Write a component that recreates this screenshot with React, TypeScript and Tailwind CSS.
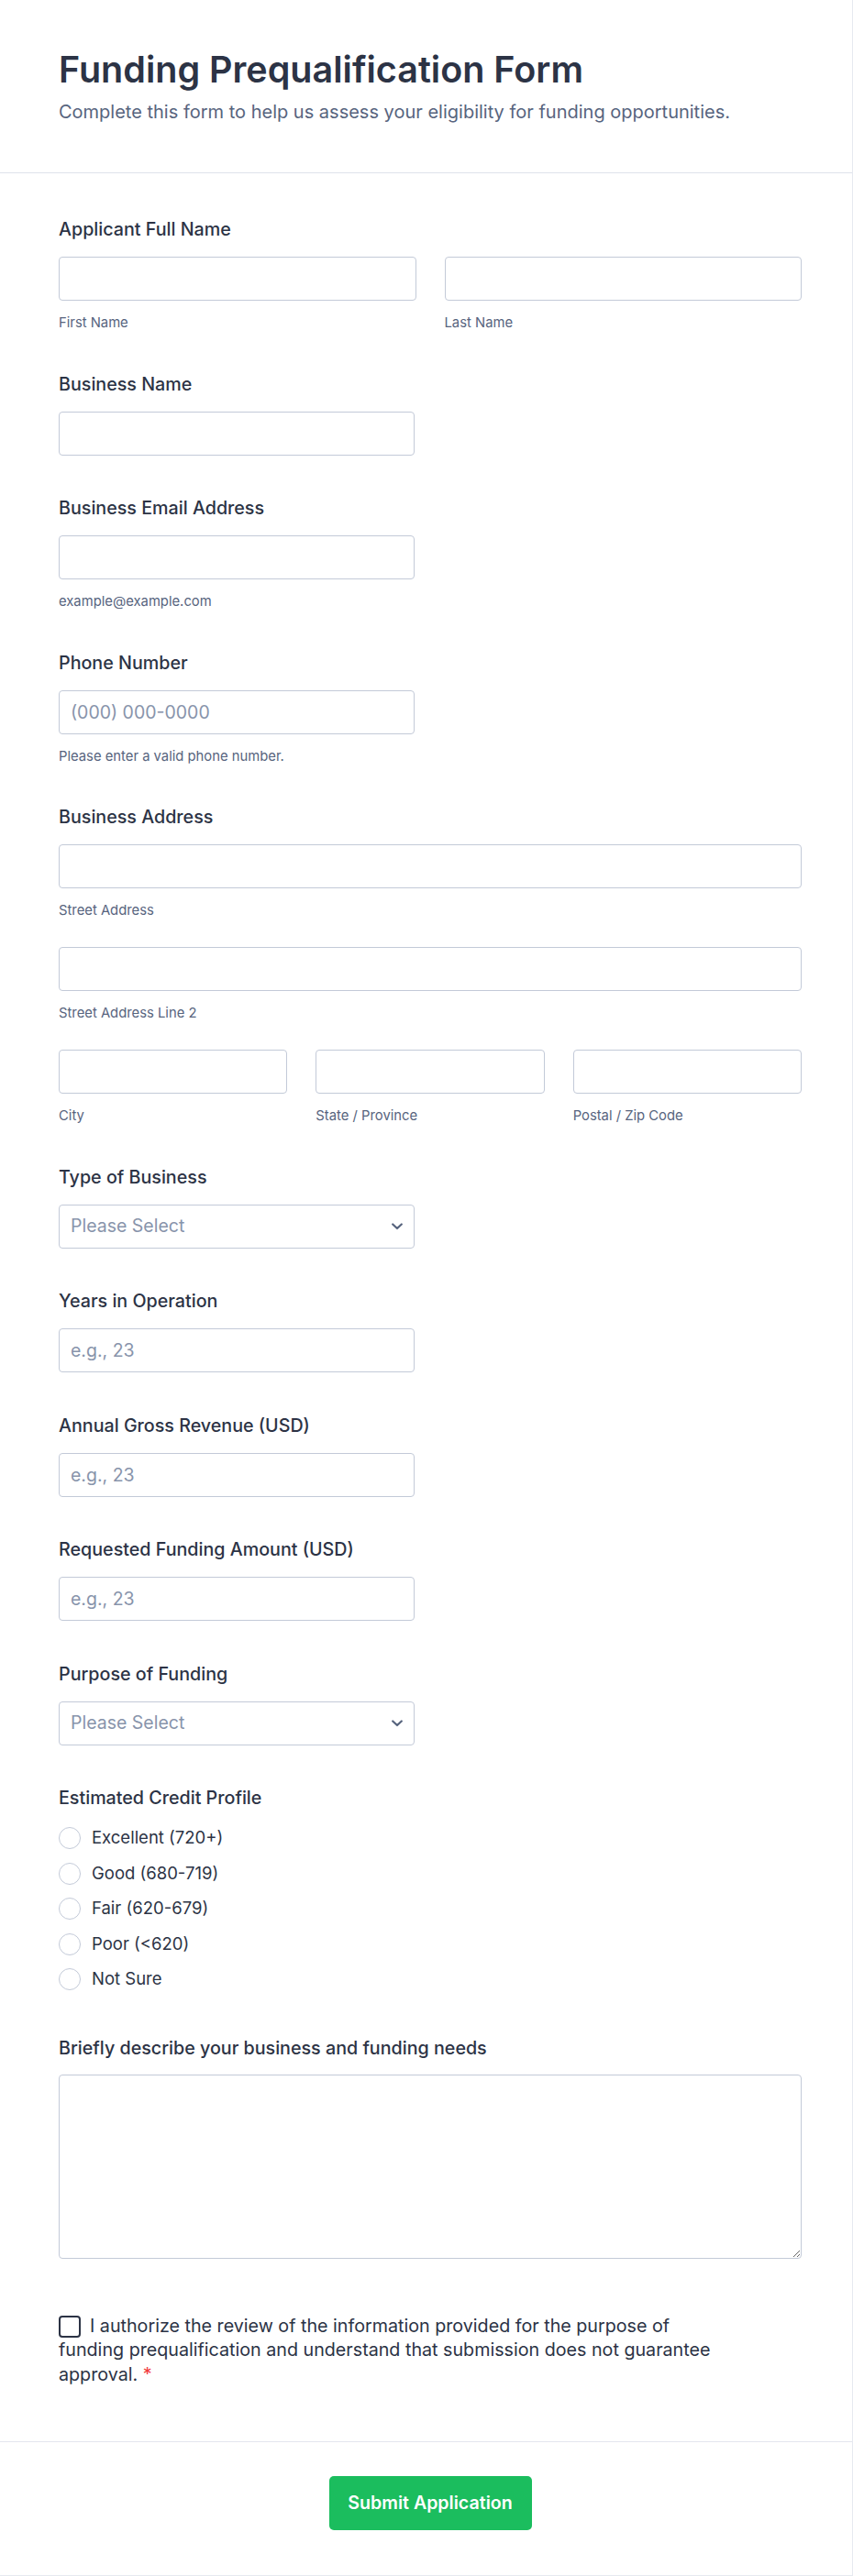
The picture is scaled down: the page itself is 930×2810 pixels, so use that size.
import React from "react";

const labelCls = "block text-[19.7px] leading-[28px] font-medium text-[#2c3345] mb-4";
const inputCls =
  "block h-12 w-full rounded-[4px] border border-[#c3cad8] bg-white px-3 text-[19.5px] text-[#2c3345] placeholder:text-[#8894ab] outline-none";
const subCls = "mt-[15px] text-[14.8px] leading-[18px] text-[#57647e]";

function Field({ label, children }: { label: string; children: React.ReactNode }) {
  return (
    <div>
      <label className={labelCls}>{label}</label>
      {children}
    </div>
  );
}

function Sub({ text }: { text: string }) {
  return <div className={subCls}>{text}</div>;
}

function SelectBox() {
  return (
    <div className="relative w-[388px]">
      <select
        defaultValue=""
        className="block h-12 w-full appearance-none rounded-[4px] border border-[#c3cad8] bg-white px-3 text-[19.5px] text-[#8894ab] outline-none"
      >
        <option value="" disabled>
          Please Select
        </option>
      </select>
      {/* chevron */}
      <svg
        className="pointer-events-none absolute right-[13px] top-1/2 -translate-y-1/2"
        width="12"
        height="8"
        viewBox="0 0 12 8"
        fill="none"
      >
        <path d="M1.2 1.5 6 6l4.8-4.5" stroke="#57647e" strokeWidth="2.2" strokeLinecap="round" strokeLinejoin="round" />
      </svg>
    </div>
  );
}

const credit = ["Excellent (720+)", "Good (680-719)", "Fair (620-679)", "Poor (<620)", "Not Sure"];

export default function App() {
  return (
    <div className="w-full bg-white font-['Inter','Noto_Sans',sans-serif] border-r border-b border-[#e6e9f0]">
      {/* Header */}
      <header className="pl-16 pr-[55px] pt-[54px] pb-[52px] border-b border-[#dfe3eb]">
        <h1 className="text-[39.5px] leading-[44px] font-semibold text-[#2c3345]">Funding Prequalification Form</h1>
        <p className="mt-[11px] text-[20px] leading-[27px] text-[#57647e]">
          Complete this form to help us assess your eligibility for funding opportunities.
        </p>
      </header>

      {/* Form body */}
      <div className="pl-16 pr-[55px] pt-[47px] pb-[60px] flex flex-col gap-[43.5px]">
        <Field label="Applicant Full Name">
          <div className="grid grid-cols-2 gap-[31px]">
            <div>
              <input className={inputCls} />
              <Sub text="First Name" />
            </div>
            <div>
              <input className={inputCls} />
              <Sub text="Last Name" />
            </div>
          </div>
        </Field>

        <Field label="Business Name">
          <input className={inputCls + " !w-[388px]"} />
        </Field>

        <Field label="Business Email Address">
          <input className={inputCls + " !w-[388px]"} />
          <Sub text="example@example.com" />
        </Field>

        <Field label="Phone Number">
          <input className={inputCls + " !w-[388px]"} placeholder="(000) 000-0000" />
          <Sub text="Please enter a valid phone number." />
        </Field>

        <Field label="Business Address">
          <div className="flex flex-col gap-[31px]">
            <div>
              <input className={inputCls} />
              <Sub text="Street Address" />
            </div>
            <div>
              <input className={inputCls} />
              <Sub text="Street Address Line 2" />
            </div>
            <div className="grid grid-cols-3 gap-[31px]">
              <div>
                <input className={inputCls} />
                <Sub text="City" />
              </div>
              <div>
                <input className={inputCls} />
                <Sub text="State / Province" />
              </div>
              <div>
                <input className={inputCls} />
                <Sub text="Postal / Zip Code" />
              </div>
            </div>
          </div>
        </Field>

        <Field label="Type of Business">
          <SelectBox />
        </Field>

        <Field label="Years in Operation">
          <input className={inputCls + " !w-[388px]"} placeholder="e.g., 23" />
        </Field>

        <Field label="Annual Gross Revenue (USD)">
          <input className={inputCls + " !w-[388px]"} placeholder="e.g., 23" />
        </Field>

        <Field label="Requested Funding Amount (USD)">
          <input className={inputCls + " !w-[388px]"} placeholder="e.g., 23" />
        </Field>

        <Field label="Purpose of Funding">
          <SelectBox />
        </Field>

        <div className="mb-[5.5px]">
          <div className="text-[19.7px] leading-[28px] font-medium text-[#2c3345]">Estimated Credit Profile</div>
          <div className="mt-[18px] flex flex-col gap-[14.5px]">
            {credit.map((c) => (
              <label key={c} className="flex h-6 items-center gap-3 text-[18.5px] text-[#2c3345]">
                <span className="h-6 w-6 shrink-0 rounded-full border border-[#c3cad8] bg-white" />
                <span>{c}</span>
              </label>
            ))}
          </div>
        </div>

        <div>
          <label className="block text-[19.7px] leading-[28px] font-medium text-[#2c3345] mb-[15px]">
            Briefly describe your business and funding needs
          </label>
          <textarea className="block h-[201px] w-full rounded-[4px] border border-[#c3cad8] bg-white px-3 py-2 text-[18px] outline-none" />
        </div>

        <p className="mt-4 max-w-[730px] text-[19.7px] leading-[26.5px] text-[#2c3345]">
          <span className="mr-[10px] inline-block h-6 w-6 rounded-[4px] border-2 border-[#2c3345] bg-white align-[-6px]" />
          I authorize the review of the information provided for the purpose of funding prequalification and understand
          that submission does not guarantee approval. <span className="text-[#f23a3c]">*</span>
        </p>
      </div>

      {/* Footer */}
      <footer className="pl-16 pr-[55px] pt-[37px] pb-[49px] border-t border-[#e3e6ee] flex justify-center">
        <button className="h-[59px] w-[221px] rounded-[5px] bg-[#1bbd5e] text-[19.6px] font-semibold text-white">
          Submit Application
        </button>
      </footer>
    </div>
  );
}
